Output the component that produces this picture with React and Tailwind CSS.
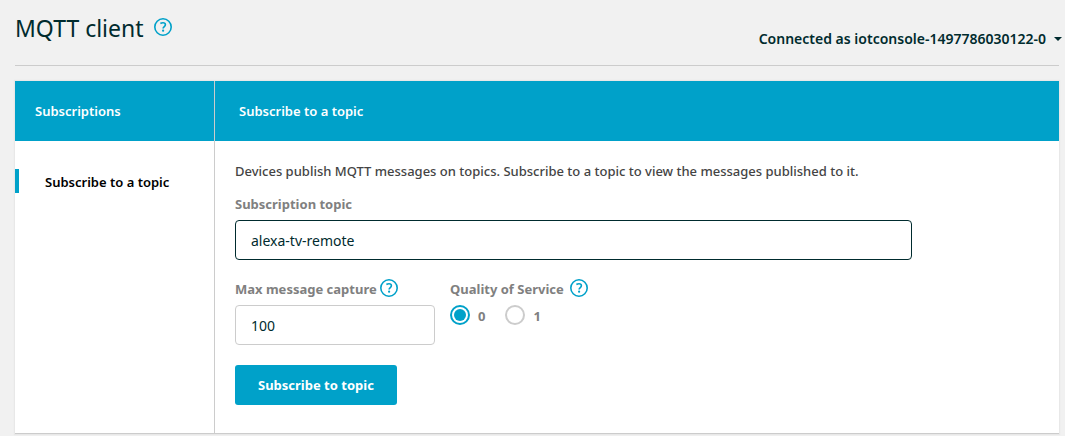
import { useState } from "react";

function HelpButton({ label }) {
  return (
    <button type="button" aria-label={label} className="size-[18px] shrink-0 text-[#00a1c9]">
      <svg viewBox="0 0 18 18" className="size-[18px]" fill="none" stroke="currentColor" aria-hidden="true">
        <circle cx="9" cy="9" r="8.2" strokeWidth="1.6" />
        <path d="M6.4 5.5C7.2 4.9 8.1 4.7 9 4.7c1.5 0 2.4.8 2.4 2 0 1.9-2.3 1.8-2.3 3.9" strokeWidth="1.6" />
        <circle cx="9.1" cy="12.7" r="1.1" fill="currentColor" stroke="none" />
      </svg>
    </button>
  );
}

function QosOption({ value, selected, onSelect }) {
  return (
    <label className="flex h-5 items-start gap-2 font-bold text-[#808080]">
      <input
        type="radio"
        name="qos"
        value={value}
        checked={selected === value}
        onChange={() => onSelect(value)}
        className="size-5 appearance-none rounded-full border-2 border-[#cccccc] bg-white bg-clip-content p-0.5 checked:border-[#00a1c9] checked:bg-[#00a1c9]"
      />
      <span className="pt-px">{value}</span>
    </label>
  );
}

export default function App() {
  const [topic, setTopic] = useState("alexa-tv-remote");
  const [capture, setCapture] = useState("100");
  const [qos, setQos] = useState("0");

  return (
    <div className="min-h-screen bg-[#f1f1f1] pr-1.5 pl-[15px] font-['Noto_Sans',sans-serif] text-[13px] leading-5 text-[#002b2e]">
      <header className="flex h-[66px] items-start justify-between border-b border-[#cccccc]">
        <div className="flex items-start gap-2.5 pt-3">
          <h1 className="text-[23px] leading-8">MQTT client</h1>
          <div className="flex pt-1.5">
            <HelpButton label="About the MQTT client" />
          </div>
        </div>
        <button type="button" className="-mr-[3px] flex items-center gap-2 pt-[29px] text-sm font-semibold">
          Connected as iotconsole-1497786030122-0
          <svg viewBox="0 0 8 4" className="h-1 w-2" fill="currentColor" aria-hidden="true">
            <path d="M0 0h8L4 4z" />
          </svg>
        </button>
      </header>

      <main className="mt-[15px] grid grid-cols-[200px_1fr] border-b border-[#cccccc] bg-white shadow-[0_0_1px_1px_#e8e8e8]">
        <aside className="border-r border-[#cccccc]">
          <h2 className="flex h-[60px] items-center bg-[#00a1c9] px-5 font-semibold text-white">Subscriptions</h2>
          <nav className="pt-7">
            <a href="#subscribe" className="flex h-6 items-center border-l-4 border-[#00a1c9] pt-0.5 pl-[26px] font-semibold text-black">
              Subscribe to a topic
            </a>
          </nav>
        </aside>

        <section id="subscribe">
          <h2 className="flex h-[60px] items-center bg-[#00a1c9] px-6 font-semibold text-white">Subscribe to a topic</h2>
          <form className="px-5 pt-5 pb-7" onSubmit={(e) => e.preventDefault()}>
            <p className="font-medium text-[#444444]">
              Devices publish MQTT messages on topics. Subscribe to a topic to view the messages published to it.
            </p>
            <label htmlFor="topic" className="mt-[13px] block font-bold text-[#808080]">Subscription topic</label>
            <input
              id="topic"
              value={topic}
              onChange={(e) => setTopic(e.target.value)}
              className="mt-1.5 block h-10 w-full max-w-[677px] rounded border border-[#002b2e] bg-white px-[15px] text-sm outline-none"
            />
            <div className="mt-[19px] flex gap-[15px]">
              <div className="w-[200px]">
                <div className="flex h-5 items-start gap-[3px]">
                  <label htmlFor="capture" className="font-bold text-[#808080]">Max message capture</label>
                  <HelpButton label="About max message capture" />
                </div>
                <input
                  id="capture"
                  value={capture}
                  onChange={(e) => setCapture(e.target.value)}
                  className="mt-1.5 block h-10 w-full rounded border border-[#cccccc] bg-white px-[15px] text-sm outline-none"
                />
              </div>
              <fieldset>
                <legend className="flex h-5 items-start gap-1.5 font-bold text-[#808080]">
                  Quality of Service
                  <HelpButton label="About quality of service" />
                </legend>
                <div className="mt-1.5 flex gap-5">
                  <QosOption value="0" selected={qos} onSelect={setQos} />
                  <QosOption value="1" selected={qos} onSelect={setQos} />
                </div>
              </fieldset>
            </div>
            <button type="submit" className="mt-5 h-10 rounded-[3px] bg-[#00a1c9] px-[23px] font-bold text-white">
              Subscribe to topic
            </button>
          </form>
        </section>
      </main>
    </div>
  );
}
